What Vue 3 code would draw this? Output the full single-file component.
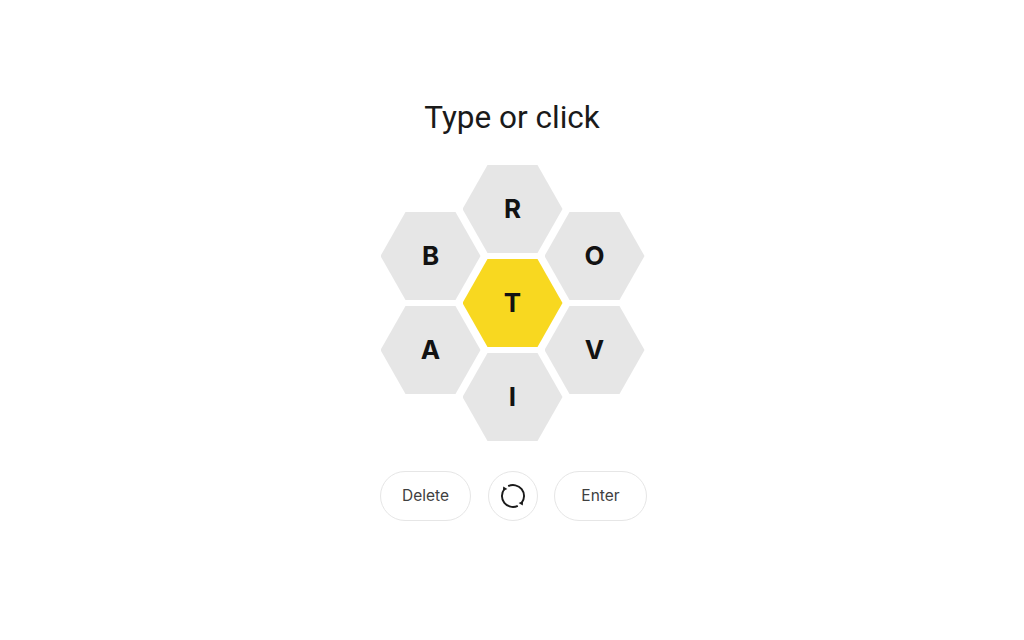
<script setup>
const leftCol = ['B', 'A']
const midCol = ['R', 'T', 'I']
const rightCol = ['O', 'V']
</script>

<template>
  <div class="page">
    <h1 class="prompt">Type or click</h1>

    <div class="hive">
      <div class="hive-col">
        <div v-for="l in leftCol" :key="l" class="cell"><span>{{ l }}</span></div>
      </div>
      <div class="hive-col">
        <div v-for="l in midCol" :key="l" class="cell" :class="{ center: l === 'T' }"><span>{{ l }}</span></div>
      </div>
      <div class="hive-col">
        <div v-for="l in rightCol" :key="l" class="cell"><span>{{ l }}</span></div>
      </div>
    </div>

    <div class="actions">
      <button class="btn delete">Delete</button>
      <button class="btn round" aria-label="Shuffle">
        <svg width="26" height="26" viewBox="0 0 26 26" fill="none">
          <path d="M8.2 3.2A11 11 0 0 1 21.6 20" stroke="#1a1a1a" stroke-width="1.9" />
          <path d="M17.8 22.8A11 11 0 0 1 4.4 6" stroke="#1a1a1a" stroke-width="1.9" />
          <path d="M18.6 20L23 18L22.8 22.6Z" fill="#1a1a1a" />
          <path d="M7.4 6L3 8L3.2 3.4Z" fill="#1a1a1a" />
        </svg>
      </button>
      <button class="btn enter">Enter</button>
    </div>
  </div>
</template>

<style scoped>
.page {
  width: 1024px;
  height: 640px;
  background: #fff;
  display: flex;
  flex-direction: column;
  align-items: center;
  padding-top: 99px;
  box-sizing: border-box;
  font-family: "Liberation Sans", Arial, sans-serif;
}

.prompt {
  margin: 0 0 29px 0;
  height: 37px;
  line-height: 37px;
  font-family: "Roboto", "Liberation Sans", sans-serif;
  font-size: 31.5px;
  font-weight: 400;
  color: #1a1a1a;
}

.hive {
  display: flex;
  align-items: center;
  justify-content: center;
  height: 276px;
  margin-bottom: 30px;
  margin-left: 1px;
}

.hive-col {
  display: flex;
  flex-direction: column;
  gap: 6px;
}

.hive-col + .hive-col {
  margin-left: -18px;
}

.cell {
  width: 100px;
  height: 88px;
  display: flex;
  align-items: center;
  justify-content: center;
  background: #e6e6e6;
  clip-path: polygon(25% 0, 75% 0, 100% 50%, 75% 100%, 25% 100%, 0 50%);
  font-family: "Inter", "Liberation Sans", sans-serif;
  font-size: 26px;
  font-weight: 700;
  color: #121212;
}

.cell span {
  margin-bottom: 2px;
}

.cell.center {
  background: #f8d820;
}

.actions {
  display: flex;
  gap: 16px;
  margin-left: 3px;
}

.btn {
  height: 50px;
  padding: 0 0 2px 0;
  background: #fff;
  border: 1px solid #e6e6e6;
  border-radius: 25px;
  font-family: "Inter", "Liberation Sans", sans-serif;
  font-size: 15.5px;
  color: #404040;
  display: flex;
  align-items: center;
  justify-content: center;
  box-sizing: border-box;
}

.delete {
  width: 91px;
  margin-right: 1px;
}

.enter {
  width: 93px;
}

.round {
  width: 50px;
  padding: 0;
}
</style>
